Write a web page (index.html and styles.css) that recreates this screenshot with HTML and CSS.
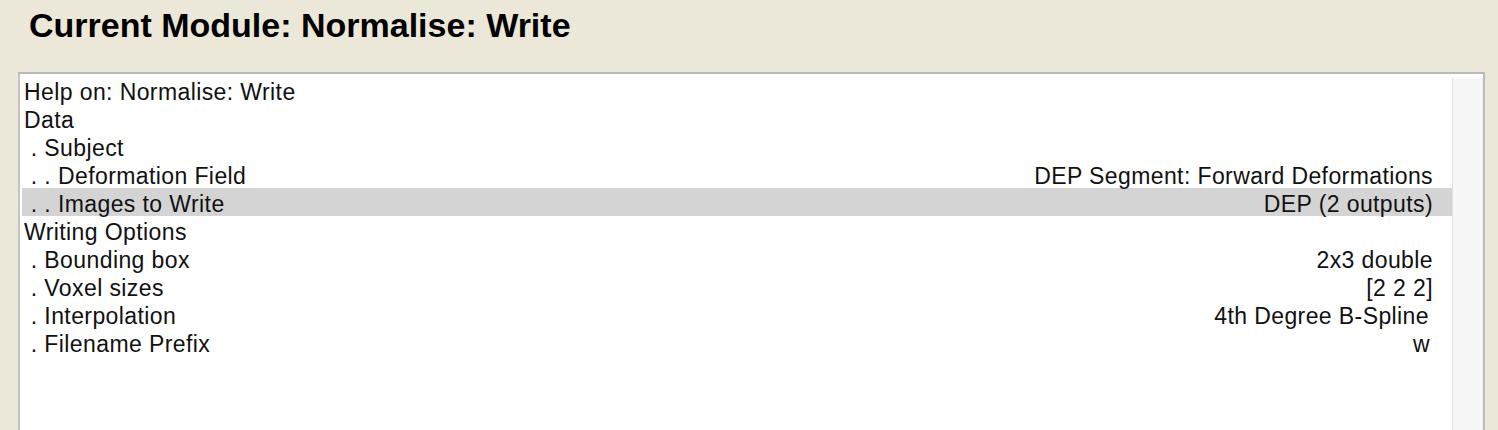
FILE: index.html
```html
<!DOCTYPE html>
<html>
<head>
<meta charset="utf-8">
<link rel="stylesheet" href="styles.css">
</head>
<body>
<div class="page">
  <h1 class="title">Current Module: Normalise: Write</h1>
  <div class="listbox">
    <div class="rows">
      <div class="row"><span class="label">Help on: Normalise: Write</span><span class="value"></span></div>
      <div class="row"><span class="label">Data</span><span class="value"></span></div>
      <div class="row"><span class="label">&nbsp;. Subject</span><span class="value"></span></div>
      <div class="row"><span class="label">&nbsp;. . Deformation Field</span><span class="value">DEP Segment: Forward Deformations</span></div>
      <div class="row selected"><span class="label">&nbsp;. . Images to Write</span><span class="value">DEP (2 outputs)</span></div>
      <div class="row"><span class="label">Writing Options</span><span class="value"></span></div>
      <div class="row"><span class="label">&nbsp;. Bounding box</span><span class="value">2x3 double</span></div>
      <div class="row"><span class="label">&nbsp;. Voxel sizes</span><span class="value">[2 2 2]</span></div>
      <div class="row"><span class="label">&nbsp;. Interpolation</span><span class="value pad-4">4th Degree B-Spline</span></div>
      <div class="row"><span class="label">&nbsp;. Filename Prefix</span><span class="value pad-3">w</span></div>
    </div>
    <div class="scrollbar"></div>
  </div>
</div>
</body>
</html>
```
FILE: styles.css
```css
html, body {
  margin: 0;
  padding: 0;
  background: #ece8d9;
  overflow: hidden;
}
.page {
  width: 1498px;
  height: 430px;
  padding: 0 0 0 18px;
  box-sizing: border-box;
  display: flex;
  flex-direction: column;
  overflow: hidden;
}
.title {
  flex: none;
  margin: 0;
  padding: 5px 0 0 11px;
  height: 72px;
  box-sizing: border-box;
  font-family: "Liberation Sans", Arial, sans-serif;
  font-weight: bold;
  font-size: 34px;
  line-height: 40px;
  color: #000;
}
.listbox {
  width: 1467px;
  flex: 1 1 auto;
  min-height: 0;
  border-top: 2px solid #b9b9b9;
  border-left: 2px solid #c4c4c4;
  border-right: 2px solid #bcbcbc;
  background: #fff;
  box-sizing: border-box;
  display: flex;
  padding: 2px 0 0 2px;
}
.rows {
  width: 1430px;
  flex: none;
  font-family: "Liberation Sans", Arial, sans-serif;
  font-size: 23px;
  letter-spacing: 0.4px;
  color: #111;
}
.row {
  height: 28px;
  box-sizing: border-box;
  padding: 4px 19px 0 2px;
  line-height: 24px;
  display: flex;
  justify-content: space-between;
  white-space: pre;
}
.row.selected {
  background: #d4d4d4;
}
.pad-4 { padding-right: 4px; }
.pad-3 { padding-right: 3px; }
.scrollbar {
  width: 31px;
  flex: none;
  margin-top: 2px;
  background: #f7f7f7;
  border-left: 1px solid #e2e2e2;
  border-right: 1px solid #ececec;
  box-sizing: border-box;
}
```
